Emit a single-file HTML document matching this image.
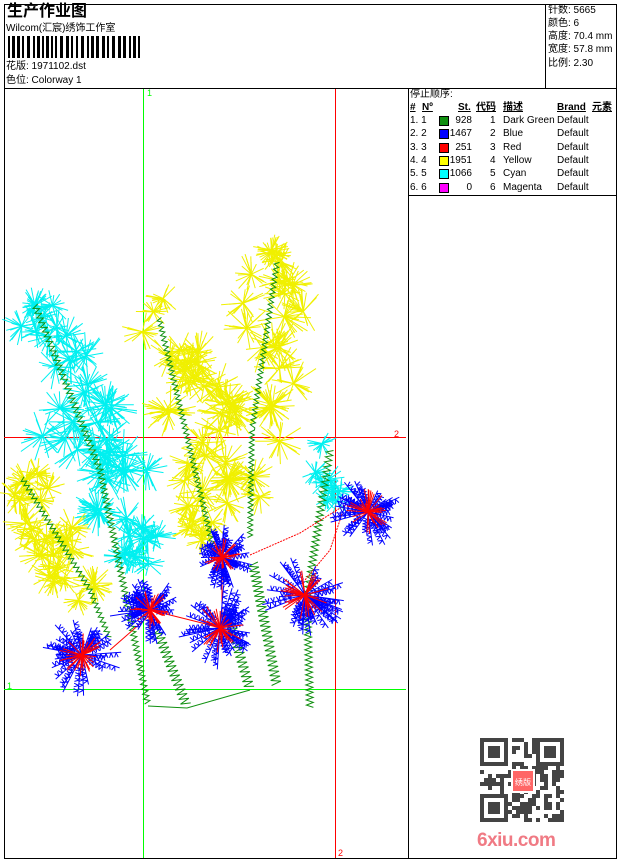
<!DOCTYPE html>
<html><head><meta charset="utf-8">
<style>
*{margin:0;padding:0;box-sizing:border-box}
body{width:620px;height:860px;background:#fff;position:relative;overflow:hidden;font-family:"Liberation Sans","Noto Sans CJK SC",sans-serif;color:#000}
.a{position:absolute;white-space:nowrap}
.ln{position:absolute;background:#000}
.t{font-size:10px;line-height:12px}
.sw{position:absolute;width:10px;height:10px;border:1px solid #000}
</style></head><body>
<div class="ln" style="left:4px;top:4px;width:613px;height:1px"></div>
<div class="ln" style="left:4px;top:4px;width:1px;height:855px"></div>
<div class="ln" style="left:616px;top:4px;width:1px;height:855px"></div>
<div class="ln" style="left:4px;top:858px;width:613px;height:1px"></div>
<div class="ln" style="left:4px;top:88px;width:613px;height:1px"></div>
<div class="ln" style="left:545px;top:4px;width:1px;height:84px"></div>
<div class="ln" style="left:408px;top:88px;width:1px;height:770px"></div>
<div class="ln" style="left:408px;top:195px;width:208px;height:1px"></div>

<div class="a" style="left:7px;top:3px;font-size:16px;font-weight:bold;line-height:18px">生产作业图</div>
<div class="a t" style="left:6px;top:23px">Wilcom(汇宸)绣饰工作室</div>
<svg class="a" style="left:8px;top:36px" width="135" height="22" id="bc"></svg>
<div class="a t" style="left:6px;top:61px">花版: 1971102.dst</div>
<div class="a t" style="left:6px;top:75px">色位: Colorway 1</div>

<div class="a t" style="left:548px;top:5px">针数: 5665</div>
<div class="a t" style="left:548px;top:18px">颜色: 6</div>
<div class="a t" style="left:548px;top:31px">高度: 70.4 mm</div>
<div class="a t" style="left:548px;top:44px">宽度: 57.8 mm</div>
<div class="a t" style="left:548px;top:58px">比例: 2.30</div>

<div class="a t" style="left:410px;top:89px">停止顺序:</div>
<div class="a t" style="left:410px;top:102px;font-weight:bold;text-decoration:underline">#</div>
<div class="a t" style="left:422px;top:102px;font-weight:bold;text-decoration:underline">Nº</div>
<div class="a t" style="left:458px;top:102px;font-weight:bold;text-decoration:underline">St.</div>
<div class="a t" style="left:476px;top:102px;font-weight:bold;text-decoration:underline">代码</div>
<div class="a t" style="left:503px;top:102px;font-weight:bold;text-decoration:underline">描述</div>
<div class="a t" style="left:557px;top:102px;font-weight:bold;text-decoration:underline">Brand</div>
<div class="a t" style="left:592px;top:102px;font-weight:bold;text-decoration:underline">元素</div>
<div id="rows"></div>

<svg class="a" style="left:0;top:0" width="620" height="860" id="d"></svg>

<svg class="a" style="left:480px;top:738px" width="86" height="86" id="qr"></svg>
<div class="a" style="left:477px;top:830px;font-size:19px;font-weight:bold;color:#f07a84;letter-spacing:-0.5px">6xiu.com</div>

<script>
var R=[["1","#109010","928","Dark Green"],["2","#0000ff","1467","Blue"],["3","#ff0000","251","Red"],["4","#ffff00","1951","Yellow"],["5","#00ffff","1066","Cyan"],["6","#ff00ff","0","Magenta"]];
var h="";R.forEach(function(r,i){var y=115+i*13.3;
h+='<div class="a t" style="left:410px;top:'+y+'px">'+r[0]+'. '+r[0]+'</div><div class="sw" style="left:439px;top:'+(y+1)+'px;background:'+r[1]+'"></div><div class="a t" style="left:448px;top:'+y+'px;width:24px;text-align:right">'+r[2]+'</div><div class="a t" style="left:490px;top:'+y+'px">'+r[0]+'</div><div class="a t" style="left:503px;top:'+y+'px">'+r[3]+'</div><div class="a t" style="left:557px;top:'+y+'px">Default</div>';});
document.getElementById('rows').innerHTML=h;
var s=1,b="",x=0;function rnd(){s=(s*16807)%2147483647;return s/2147483647}
while(x<131){var w=rnd()<0.5?2:3;b+='<rect x="'+x+'" y="0" width="'+w+'" height="22"/>';x+=w+(rnd()<0.6?2:3);}
document.getElementById('bc').innerHTML=b;
var q="";for(var i=0;i<21;i++)for(var j=0;j<21;j++){var f=(i<7&&j<7)||(i<7&&j>13)||(i>13&&j<7);
var on;if(f){var a=i>13?i-14:i,c=j>13?j-14:j;on=(a==0||a==6||c==0||c==6||(a>1&&a<5&&c>1&&c<5));}else if((i==7||j==7)&&(i<8&&j<8))on=false;else on=rnd()<0.5;
if(on)q+='<rect x="'+(j*4)+'" y="'+(i*4)+'" width="4" height="4" fill="#444"/>';}
q+='<rect x="31" y="31" width="24" height="24" fill="#fff"/><rect x="33" y="33" width="20" height="20" fill="#f66"/><text x="43" y="47" font-size="8" fill="#fff" text-anchor="middle" font-family="Noto Sans CJK SC,sans-serif">绣版</text>';
document.getElementById('qr').innerHTML=q;
var o="";
function L(x1,y1,x2,y2,c,w){o+='<line x1="'+x1+'" y1="'+y1+'" x2="'+x2+'" y2="'+y2+'" stroke="'+c+'" stroke-width="'+(w||1)+'"/>';}
L(4,437.5,406,437.5,"#f00");L(4,689.5,406,689.5,"#0f0");L(143.5,89,143.5,858,"#0f0");L(335.5,89,335.5,858,"#f00");
o+='<text x="147" y="96" font-size="9" fill="#0f0">1</text><text x="394" y="437" font-size="9" fill="#f00">2</text><text x="7" y="689" font-size="9" fill="#0f0">1</text><text x="338" y="856" font-size="9" fill="#f00">2</text>';
function star(cx,cy,r,c,n){for(var k=0;k<n;k++){var a=rnd()*6.283,l=r*(0.5+rnd()*0.5);L(cx.toFixed(1),cy.toFixed(1),(cx+Math.cos(a)*l).toFixed(1),(cy+Math.sin(a)*l).toFixed(1),c);}}
function cluster(pts,r,c,m){for(var k=0;k<pts.length-1;k++){for(var t=0;t<m;t++){var u=rnd(),x=pts[k][0]+(pts[k+1][0]-pts[k][0])*u,y=pts[k][1]+(pts[k+1][1]-pts[k][1])*u;var rr=r*(0.6+0.6*Math.sin(Math.PI*(k+u)/(pts.length-1)));star(x+(rnd()-0.5)*rr*2.4,y+(rnd()-0.5)*rr*1.4,rr*0.6+8,c,20);}}}
cluster([[35,300],[70,390],[110,480],[140,560]],28,"#00f0f0",16);
cluster([[332,435],[322,505]],14,"#00f0f0",8);
cluster([[158,300],[185,420],[210,540]],26,"#f0f000",16);
cluster([[280,245],[265,360],[250,520]],28,"#f0f000",16);
cluster([[22,470],[60,540],[80,600]],22,"#f0f000",12);
function stem(pts,amp){var p="";for(var k=0;k<pts.length-1;k++){var dx=pts[k+1][0]-pts[k][0],dy=pts[k+1][1]-pts[k][1],len=Math.hypot(dx,dy),nx=-dy/len,ny=dx/len,n=Math.floor(len/2.5);for(var t=0;t<n;t++){var u=t/n,s2=t%2?1:-1;p+=(pts[k][0]+dx*u+nx*amp*s2).toFixed(1)+","+(pts[k][1]+dy*u+ny*amp*s2).toFixed(1)+" ";}}o+='<polyline points="'+p+'" fill="none" stroke="#109010" stroke-width="1"/>';}
stem([[35,305],[100,470],[148,706]],3);
stem([[22,478],[90,590],[110,640]],2.5);
stem([[159,318],[213,547],[222,560]],2.5);
stem([[277,262],[252,430],[250,540]],2.5);
stem([[157,630],[187,707]],5);
stem([[227,610],[250,690]],5);
stem([[253,563],[277,687]],5);
stem([[330,450],[307,597],[310,710]],3.5);
o+='<polyline points="148,706 187,708 250,690" fill="none" stroke="#109010"/>';
o+='<polyline points="250,555 300,533 345,505 330,550 305,580" fill="none" stroke="#f00" stroke-dasharray="2,1"/>';
L(110,650,150,615,"#f00");L(150,610,222,628,"#f00");L(222,560,222,628,"#f00");L(110,616,150,610,"#00f");
function flower(cx,cy,r){for(var k=0;k<34;k++){var a=rnd()*6.283,l=r*(0.6+rnd()*0.5),ex=cx+Math.cos(a)*l,ey=cy+Math.sin(a)*l;L(cx,cy,ex.toFixed(1),ey.toFixed(1),"#00f");for(var t=0.35;t<1;t+=0.13){var px=cx+Math.cos(a)*l*t,py=cy+Math.sin(a)*l*t,b=a+1.2;L(px.toFixed(1),py.toFixed(1),(px+Math.cos(b)*5).toFixed(1),(py+Math.sin(b)*5).toFixed(1),"#00f");L(px.toFixed(1),py.toFixed(1),(px-Math.cos(b-2.4)*5).toFixed(1),(py-Math.sin(b-2.4)*5).toFixed(1),"#00f");}}
for(var k=0;k<36;k++){var a=rnd()*6.283,l=r*(0.25+rnd()*0.4);L(cx,cy,(cx+Math.cos(a)*l).toFixed(1),(cy+Math.sin(a)*l).toFixed(1),"#f00");}}
flower(82,655,38);flower(150,610,32);flower(220,628,40);flower(222,557,30);flower(305,595,40);flower(368,512,36);
document.getElementById('d').innerHTML=o;
</script>
</body></html>
